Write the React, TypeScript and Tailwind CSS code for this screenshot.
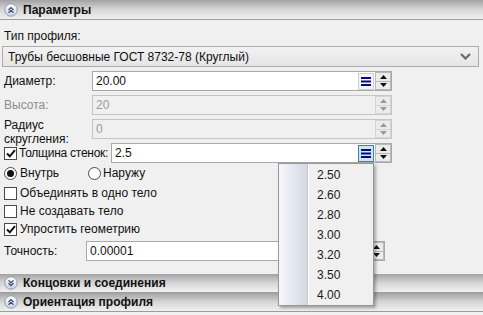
import React from "react";

const font = { fontFamily: '"Liberation Sans", Arial, sans-serif' };

function HeaderIcon({ up }: { up: boolean }) {
  return (
    <svg width="14" height="14" viewBox="0 0 14 14" className="shrink-0">
      <defs>
        <linearGradient id={up ? "hu" : "hd"} x1="0" y1="0" x2="0" y2="1">
          <stop offset="0" stopColor="#ffffff" />
          <stop offset="1" stopColor="#c9d3e3" />
        </linearGradient>
      </defs>
      <circle cx="7" cy="7" r="6.2" fill={`url(#${up ? "hu" : "hd"})`} stroke="#8e9bb0" strokeWidth="1" />
      {up ? (
        <path d="M4.5 7 L7 4.6 L9.5 7 M4.5 9.8 L7 7.4 L9.5 9.8" fill="none" stroke="#3b4a74" strokeWidth="1.2" />
      ) : (
        <path d="M4.5 4.4 L7 6.8 L9.5 4.4 M4.5 7.2 L7 9.6 L9.5 7.2" fill="none" stroke="#3b4a74" strokeWidth="1.2" />
      )}
    </svg>
  );
}

function SectionHeader({ title, up, first = false }: { title: string; up: boolean; first?: boolean }) {
  return (
    <div
      className={`${first ? "h-[20px]" : "h-[19px]"} flex items-center gap-[5px] pl-[4px] border-b border-[#9c9c9c] bg-gradient-to-b from-[#a3a3a3] via-[#d6d6d6] to-[#f0f0f0]`}
    >
      <HeaderIcon up={up} />
      <span className="text-[12px] font-bold text-[#111]">{title}</span>
    </div>
  );
}

function ListButton({ active = false }: { active?: boolean }) {
  return (
    <div
      className={`w-[16px] h-[17px] flex items-center justify-center border ${
        active ? "border-[#3c7fb1] bg-[#cde6f7]" : "border-[#cfcfcf] bg-[#f4f4f4]"
      }`}
    >
      <svg width="10" height="9" viewBox="0 0 10 9">
        <rect x="0" y="0" width="10" height="2" fill="#0a0a80" />
        <rect x="0" y="3.5" width="10" height="2" fill="#0a0a80" />
        <rect x="0" y="7" width="10" height="2" fill="#0a0a80" />
      </svg>
    </div>
  );
}

function Spinner({ disabled = false }: { disabled?: boolean }) {
  const c = disabled ? "#9a9a9a" : "#111";
  const box = disabled ? "border-[#d6d6d6] bg-[#ececec]" : "border-[#b9b9b9] bg-[#ececec]";
  return (
    <div className="w-[16px] flex flex-col ml-[1px] h-full">
      <div className={`flex-1 flex items-center justify-center border ${box}`}>
        <svg width="7" height="4" viewBox="0 0 7 4">
          <path d="M0 4 L3.5 0 L7 4 Z" fill={c} />
        </svg>
      </div>
      <div className={`flex-1 flex items-center justify-center border-x border-b ${box}`}>
        <svg width="7" height="4" viewBox="0 0 7 4">
          <path d="M0 0 L7 0 L3.5 4 Z" fill={c} />
        </svg>
      </div>
    </div>
  );
}

function NumInput({
  value,
  width,
  disabled = false,
  list = true,
  active = false,
}: {
  value: string;
  width: number;
  disabled?: boolean;
  list?: boolean;
  active?: boolean;
}) {
  return (
    <div
      className={`h-[20px] flex items-stretch border shrink-0 ${
        disabled ? "border-[#c5c5c5] bg-[#f0f0f0]" : "border-[#a9a9a9] bg-white"
      }`}
      style={{ width }}
    >
      <div className={`flex-1 flex items-center pl-[3px] text-[12px] ${disabled ? "text-[#9a9a9a]" : "text-[#111]"}`}>
        {value}
      </div>
      {list && (
        <div className="flex items-center">
          <ListButton active={active} />
        </div>
      )}
      <Spinner disabled={disabled} />
    </div>
  );
}

function CheckBox({ checked }: { checked: boolean }) {
  return (
    <div className="w-[13px] h-[13px] border border-[#4a4a4a] bg-white flex items-center justify-center shrink-0">
      {checked && (
        <svg width="10" height="9" viewBox="0 0 10 9">
          <path d="M1 4.5 L3.8 7.3 L9 1.2" fill="none" stroke="#111" strokeWidth="2" />
        </svg>
      )}
    </div>
  );
}

function Radio({ checked }: { checked: boolean }) {
  return (
    <div className="w-[13px] h-[13px] rounded-full border border-[#4a4a4a] bg-white flex items-center justify-center shrink-0">
      {checked && <div className="w-[7px] h-[7px] rounded-full bg-[#111]" />}
    </div>
  );
}

export default function App() {
  const items = ["2.50", "2.60", "2.80", "3.00", "3.20", "3.50", "4.00"];
  return (
    <div className="relative w-[483px] h-[315px] overflow-hidden bg-[#f0f0f0] text-[#111]" style={font}>
      <SectionHeader title="Параметры" up first />

      <div className="pl-[4px] h-[26px] flex items-end pb-[1px] text-[12px]">Тип профиля:</div>

      <div className="mx-[2px] w-[477px] h-[21px] flex items-center justify-between border border-[#acacac] bg-gradient-to-b from-[#f2f2f2] to-[#e5e5e5] px-[5px] text-[12px]">
        <span>Трубы бесшовные ГОСТ 8732-78 (Круглый)</span>
        <svg width="11" height="7" viewBox="0 0 11 7" className="mr-[2px]">
          <path d="M1 1 L5.5 5.5 L10 1" fill="none" stroke="#6a6a6a" strokeWidth="2.2" />
        </svg>
      </div>

      <div className="mt-[4px] flex items-center h-[20px]">
        <div className="w-[92px] pl-[4px] text-[12px] whitespace-nowrap">Диаметр:</div>
        <NumInput value="20.00" width={300} />
      </div>

      <div className="mt-[4px] flex items-center h-[20px]">
        <div className="w-[92px] pl-[4px] text-[12px] text-[#8d8d8d] whitespace-nowrap">Высота:</div>
        <NumInput value="20" width={300} disabled list={false} />
      </div>

      <div className="mt-[4px] flex items-center h-[20px]">
        <div className="w-[92px] pl-[4px] text-[12px] leading-[14px] mt-[5px] whitespace-nowrap">
          Радиус
          <br />
          скругления:
        </div>
        <NumInput value="0" width={300} disabled list={false} />
      </div>

      <div className="mt-[4px] flex items-center h-[20px]">
        <div className="w-[111px] shrink-0 pl-[4px] flex items-center gap-[2px] text-[12px] whitespace-nowrap">
          <CheckBox checked />
          <span className="tracking-[-0.25px]">Толщина стенок:</span>
        </div>
        <NumInput value="2.5" width={281} active />
      </div>

      <div className="mt-[1px] h-[18px] flex items-center text-[12px]">
        <div className="w-[88px] pl-[4px] flex items-center gap-[3px]">
          <Radio checked />
          <span>Внутрь</span>
        </div>
        <div className="flex items-center gap-[2px]">
          <Radio checked={false} />
          <span>Наружу</span>
        </div>
      </div>

      <div className="mt-[2px] h-[18px] pl-[4px] flex items-center gap-[3px] text-[12px]">
        <CheckBox checked={false} />
        <span>Объединять в одно тело</span>
      </div>
      <div className="h-[18px] pl-[4px] flex items-center gap-[3px] text-[12px]">
        <CheckBox checked={false} />
        <span>Не создавать тело</span>
      </div>
      <div className="h-[18px] pl-[4px] flex items-center gap-[3px] text-[12px]">
        <CheckBox checked />
        <span>Упростить геометрию</span>
      </div>

      <div className="mt-[3px] flex items-center h-[20px]">
        <div className="w-[86px] pl-[4px] text-[12px]">Точность:</div>
        <NumInput value="0.00001" width={299} list={false} />
      </div>

      <div className="mt-[13px]">
        <SectionHeader title="Концовки и соединения" up={false} />
        <SectionHeader title="Ориентация профиля" up />
      </div>

      <div className="absolute left-[278px] top-[163px] w-[96px] h-[143px] border border-[#979797] bg-[#f0f0f0] shadow-[2px_2px_3px_rgba(0,0,0,0.3)] flex">
        <div className="w-[29px] h-full bg-gradient-to-r from-[#f7f8fb] to-[#d3d8e4] border-r border-[#c8c8c8]" />
        <div className="flex-1 flex flex-col pt-[1px] border-l border-white">
          {items.map((v) => (
            <div key={v} className="h-[20px] flex items-center pl-[8px] text-[12px] text-[#1a1a1a]">
              {v}
            </div>
          ))}
        </div>
      </div>
    </div>
  );
}
